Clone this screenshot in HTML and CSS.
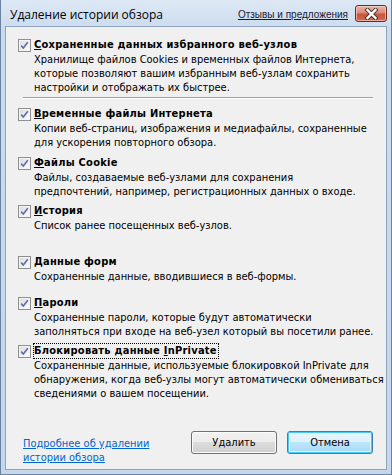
FILE: index.html
```html
<!DOCTYPE html>
<html lang="ru">
<head>
<meta charset="utf-8">
<title>Удаление истории обзора</title>
<link rel="stylesheet" href="styles.css">
</head>
<body>
<div class="window">
  <div class="titlebar">
    <span class="title">Удаление истории обзора</span>
    <a class="feedback" href="#">Отзывы и предложения</a>
    <div class="close">
      <svg width="17" height="12" viewBox="0 0 17 12">
        <path d="M4.5 2 L12.5 10 M12.5 2 L4.5 10" stroke="#3f3333" stroke-width="4.2" stroke-linecap="square" fill="none"/>
        <path d="M4.5 2 L12.5 10 M12.5 2 L4.5 10" stroke="#ffffff" stroke-width="2.4" stroke-linecap="square" fill="none"/>
      </svg>
    </div>
  </div>
  <div class="content">
    <div class="options">
      <div class="option o1">
        <div class="head"><span class="cb"><svg width="11" height="11" viewBox="0 0 11 11"><path d="M2.2 5.6 L4.3 8 L8.8 2.2" stroke="#5a6eae" stroke-width="1.6" fill="none"/></svg></span><span class="label"><u>С</u>охраненные данных избранного веб-узлов</span></div>
        <div class="desc">Хранилище файлов Cookies и временных файлов Интернета,<br>которые позволяют вашим избранным веб-узлам сохранить<br>настройки и отображать их быстрее.</div>
      </div>
      <div class="sep"></div>
      <div class="option o2">
        <div class="head"><span class="cb"><svg width="11" height="11" viewBox="0 0 11 11"><path d="M2.2 5.6 L4.3 8 L8.8 2.2" stroke="#5a6eae" stroke-width="1.6" fill="none"/></svg></span><span class="label"><u>В</u>ременные файлы Интернета</span></div>
        <div class="desc">Копии веб-страниц, изображения и медиафайлы, сохраненные<br>для ускорения повторного обзора.</div>
      </div>
      <div class="option o3">
        <div class="head"><span class="cb"><svg width="11" height="11" viewBox="0 0 11 11"><path d="M2.2 5.6 L4.3 8 L8.8 2.2" stroke="#5a6eae" stroke-width="1.6" fill="none"/></svg></span><span class="label"><u>Ф</u>айлы Cookie</span></div>
        <div class="desc">Файлы, создаваемые веб-узлами для сохранения<br>предпочтений, например, регистрационных данных о входе.</div>
      </div>
      <div class="option o4">
        <div class="head"><span class="cb"><svg width="11" height="11" viewBox="0 0 11 11"><path d="M2.2 5.6 L4.3 8 L8.8 2.2" stroke="#5a6eae" stroke-width="1.6" fill="none"/></svg></span><span class="label"><u>И</u>стория</span></div>
        <div class="desc">Список ранее посещенных веб-узлов.</div>
      </div>
      <div class="option o5">
        <div class="head"><span class="cb"><svg width="11" height="11" viewBox="0 0 11 11"><path d="M2.2 5.6 L4.3 8 L8.8 2.2" stroke="#5a6eae" stroke-width="1.6" fill="none"/></svg></span><span class="label"><u>Д</u>анные форм</span></div>
        <div class="desc">Сохраненные данные, вводившиеся в веб-формы.</div>
      </div>
      <div class="option o6">
        <div class="head"><span class="cb"><svg width="11" height="11" viewBox="0 0 11 11"><path d="M2.2 5.6 L4.3 8 L8.8 2.2" stroke="#5a6eae" stroke-width="1.6" fill="none"/></svg></span><span class="label"><u>П</u>ароли</span></div>
        <div class="desc">Сохраненные пароли, которые будут автоматически<br>заполняться при входе на веб-узел который вы посетили ранее.</div>
      </div>
      <div class="option o7">
        <div class="head"><span class="cb"><svg width="11" height="11" viewBox="0 0 11 11"><path d="M2.2 5.6 L4.3 8 L8.8 2.2" stroke="#5a6eae" stroke-width="1.6" fill="none"/></svg></span><span class="label focus">Блокировать данные <u>I</u>nPrivate</span></div>
        <div class="desc">Сохраненные данные, используемые блокировкой InPrivate для<br>обнаружения, когда веб-узлы могут автоматически обмениваться<br>сведениями о вашем посещении.</div>
      </div>
    </div>
    <div class="footer">
      <a class="more" href="#">Подробнее об удалении<br>истории обзора</a>
      <div class="buttons">
        <button class="btn">У<u>д</u>алить</button>
        <button class="btn default">Отмена</button>
      </div>
    </div>
  </div>
</div>
</body>
</html>
```
FILE: styles.css
```css
html, body {
  margin: 0;
  padding: 0;
  background: #c9d9ec;
}
body {
  width: 392px;
  height: 475px;
  overflow: hidden;
  font-family: "DejaVu Sans", sans-serif;
  font-stretch: condensed;
  font-size: 11px;
  color: #000;
}
.window {
  box-sizing: border-box;
  width: 392px;
  height: 475px;
  display: flex;
  flex-direction: column;
  padding: 0 4px 4px 4px;
  background: linear-gradient(#dde8f4, #cbdbee 30px, #c6d7eb);
  border: 1px solid #6b83a0;
  border-top: none;
}
.titlebar {
  height: 26px;
  display: flex;
  align-items: center;
  position: relative;
  padding-left: 5px;
}
.title {
  font-family: "Open Sans", sans-serif;
  font-stretch: normal;
  font-size: 12px;
  color: #000;
  flex: 1;
  margin-top: 3px;
}
.feedback {
  font-family: "Liberation Sans", sans-serif;
  font-stretch: normal;
  font-size: 10px;
  color: #1b1b2e;
  text-decoration: underline;
  margin-right: 39px;
  margin-top: 3px;
}
.close {
  position: absolute;
  right: 0;
  top: 5px;
  width: 30px;
  height: 15px;
  border: 1px solid #6d2a20;
  border-radius: 3px;
  background: linear-gradient(#ebb5a7, #da8c79 45%, #c8543b 55%, #d26a4f);
  box-shadow: inset 0 0 0 1px rgba(255, 220, 210, 0.6);
  display: flex;
  align-items: center;
  justify-content: center;
}
.close svg { display: block; }
.content {
  flex: 1;
  display: flex;
  flex-direction: column;
  background: #f0f0f0;
  border: 1px solid #8ea3bd;
  padding: 0 13px 4px 12px;
}
.options {
  display: flex;
  flex-direction: column;
}
.head {
  display: flex;
  align-items: center;
  height: 16px;
  font-weight: bold;
  letter-spacing: 0.25px;
}
.cb {
  box-sizing: border-box;
  width: 13px;
  height: 13px;
  border: 1px solid #8e8f8f;
  background: linear-gradient(135deg, #dadada, #ffffff);
  box-shadow: inset 0 0 0 1px #f4f4f4;
  display: flex;
  align-items: center;
  justify-content: center;
  margin-right: 3px;
  flex: none;
}
.cb svg { display: block; }
.label { line-height: 14px; white-space: nowrap; }
.label.focus {
  outline: 1px dotted #000;
  outline-offset: 0;
  padding-right: 1px;
}
.desc {
  padding-left: 16px;
  line-height: 14px;
  white-space: nowrap;
}
.o1 { margin-top: 10px; }
.sep {
  margin: 2px 0 0 5px;
  width: 350px;
  height: 1px;
  background: #a0a0a0;
  border-bottom: 1px solid #ffffff;
}
.o2 { margin-top: 7px; }
.o3 { margin-top: 5px; }
.o4 { margin-top: 4px; }
.o5 { margin-top: 21px; }
.o6 { margin-top: 11px; }
.o7 { margin-top: 4px; }
.footer {
  margin-top: auto;
  display: flex;
  justify-content: space-between;
  align-items: flex-start;
}
.more {
  color: #0066cc;
  text-decoration: underline;
  line-height: 14px;
  margin: 6px 0 0 5px;
}
.buttons {
  display: flex;
  gap: 10px;
}
.btn {
  box-sizing: border-box;
  width: 86px;
  height: 23px;
  font-family: "DejaVu Sans", sans-serif;
  font-stretch: condensed;
  font-size: 11px;
  color: #000;
  border: 1px solid #707070;
  border-radius: 3px;
  background: linear-gradient(#f2f2f2, #ebebeb 50%, #dddddd 50%, #cfcfcf);
  box-shadow: inset 0 0 0 1px #fcfcfc;
  padding: 0;
}
.btn.default {
  border-color: #3c7fb1;
  background: linear-gradient(#eaf6fd, #d9f0fc 50%, #bee6fd 50%, #a7d9f5);
  box-shadow: inset 0 0 0 1px #48c9f8, inset 0 0 0 2px #e0f4fd;
}
```
